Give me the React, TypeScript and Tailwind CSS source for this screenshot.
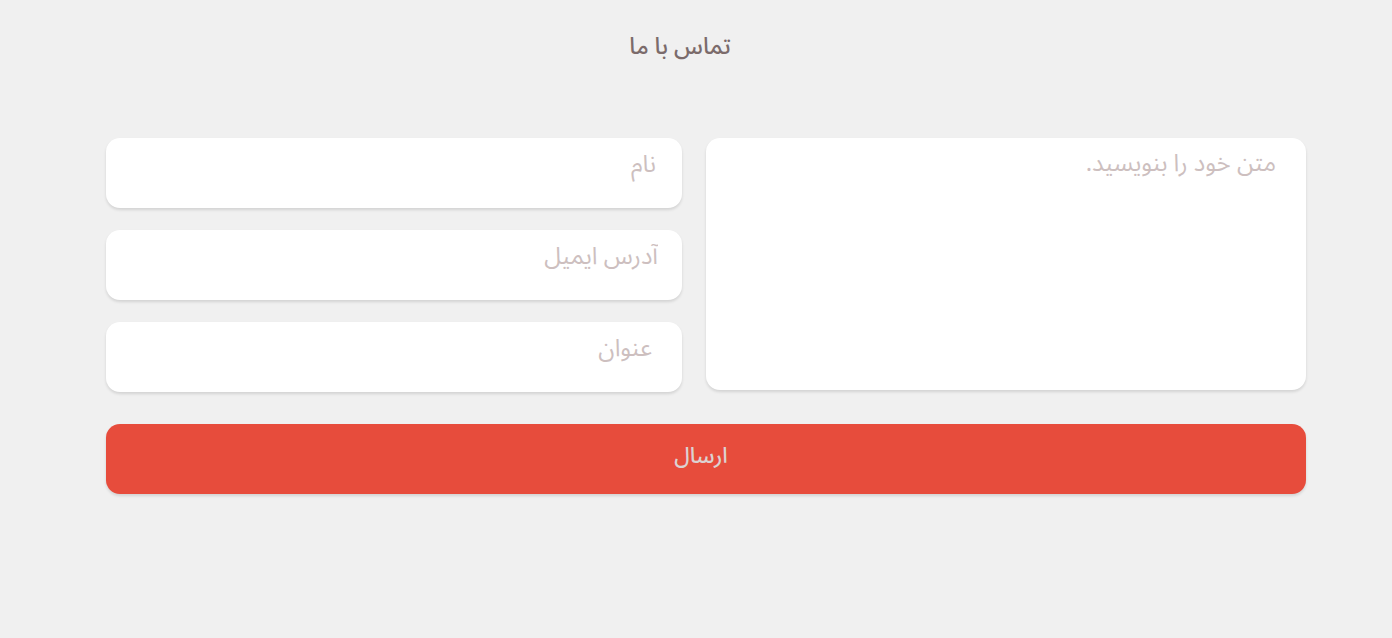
export default function App() {
    const font = { fontFamily: '"Noto Sans Arabic", "DejaVu Sans", "Noto Sans", sans-serif' };
    return (
        <div dir="rtl" style={font} className="min-h-[638px] w-full bg-[#f0f0f0]">
            <h1 className="pt-[31px] text-center text-[23px] font-medium leading-[32px] text-[#7b6b6b] pr-[32px]">
                تماس با ما
            </h1>
            <form className="mr-[86px] mt-[75px] w-[1200px]">
                <div className="flex gap-6">
                    <textarea
                        placeholder="متن خود را بنویسید."
                        className="h-[252px] w-[600px] resize-none rounded-[14px] bg-white px-[30px] py-[9px] text-[24px] leading-[34px] text-[#7b6b6b] shadow-[0_2px_3px_rgba(0,0,0,0.12)] outline-none placeholder:text-[#cdbfbf]"
                    />
                    <div className="flex w-[576px] flex-col gap-[22px]">
                        <input
                            placeholder="نام"
                            className="h-[70px] rounded-[14px] bg-white px-[26px] pb-[17px] text-[24px] text-[#7b6b6b] shadow-[0_2px_3px_rgba(0,0,0,0.12)] outline-none placeholder:text-[#cdbfbf]"
                        />
                        <input
                            placeholder="آدرس ایمیل"
                            className="h-[70px] rounded-[14px] bg-white px-[24px] pb-[17px] text-[24px] text-[#7b6b6b] shadow-[0_2px_3px_rgba(0,0,0,0.12)] outline-none placeholder:text-[#cdbfbf]"
                        />
                        <input
                            placeholder="عنوان"
                            className="h-[70px] rounded-[14px] bg-white px-[30px] pb-[17px] text-[24px] text-[#7b6b6b] shadow-[0_2px_3px_rgba(0,0,0,0.12)] outline-none placeholder:text-[#cdbfbf]"
                        />
                    </div>
                </div>
                <button
                    type="button"
                    className="mt-[32px] h-[70px] w-full rounded-[14px] bg-[#e74c3c] pb-[6px] pr-[10px] text-[22px] font-medium text-[#dcd2d2] shadow-[0_2px_3px_rgba(0,0,0,0.12)]"
                >
                    ارسال
                </button>
            </form>
        </div>
    );
}
